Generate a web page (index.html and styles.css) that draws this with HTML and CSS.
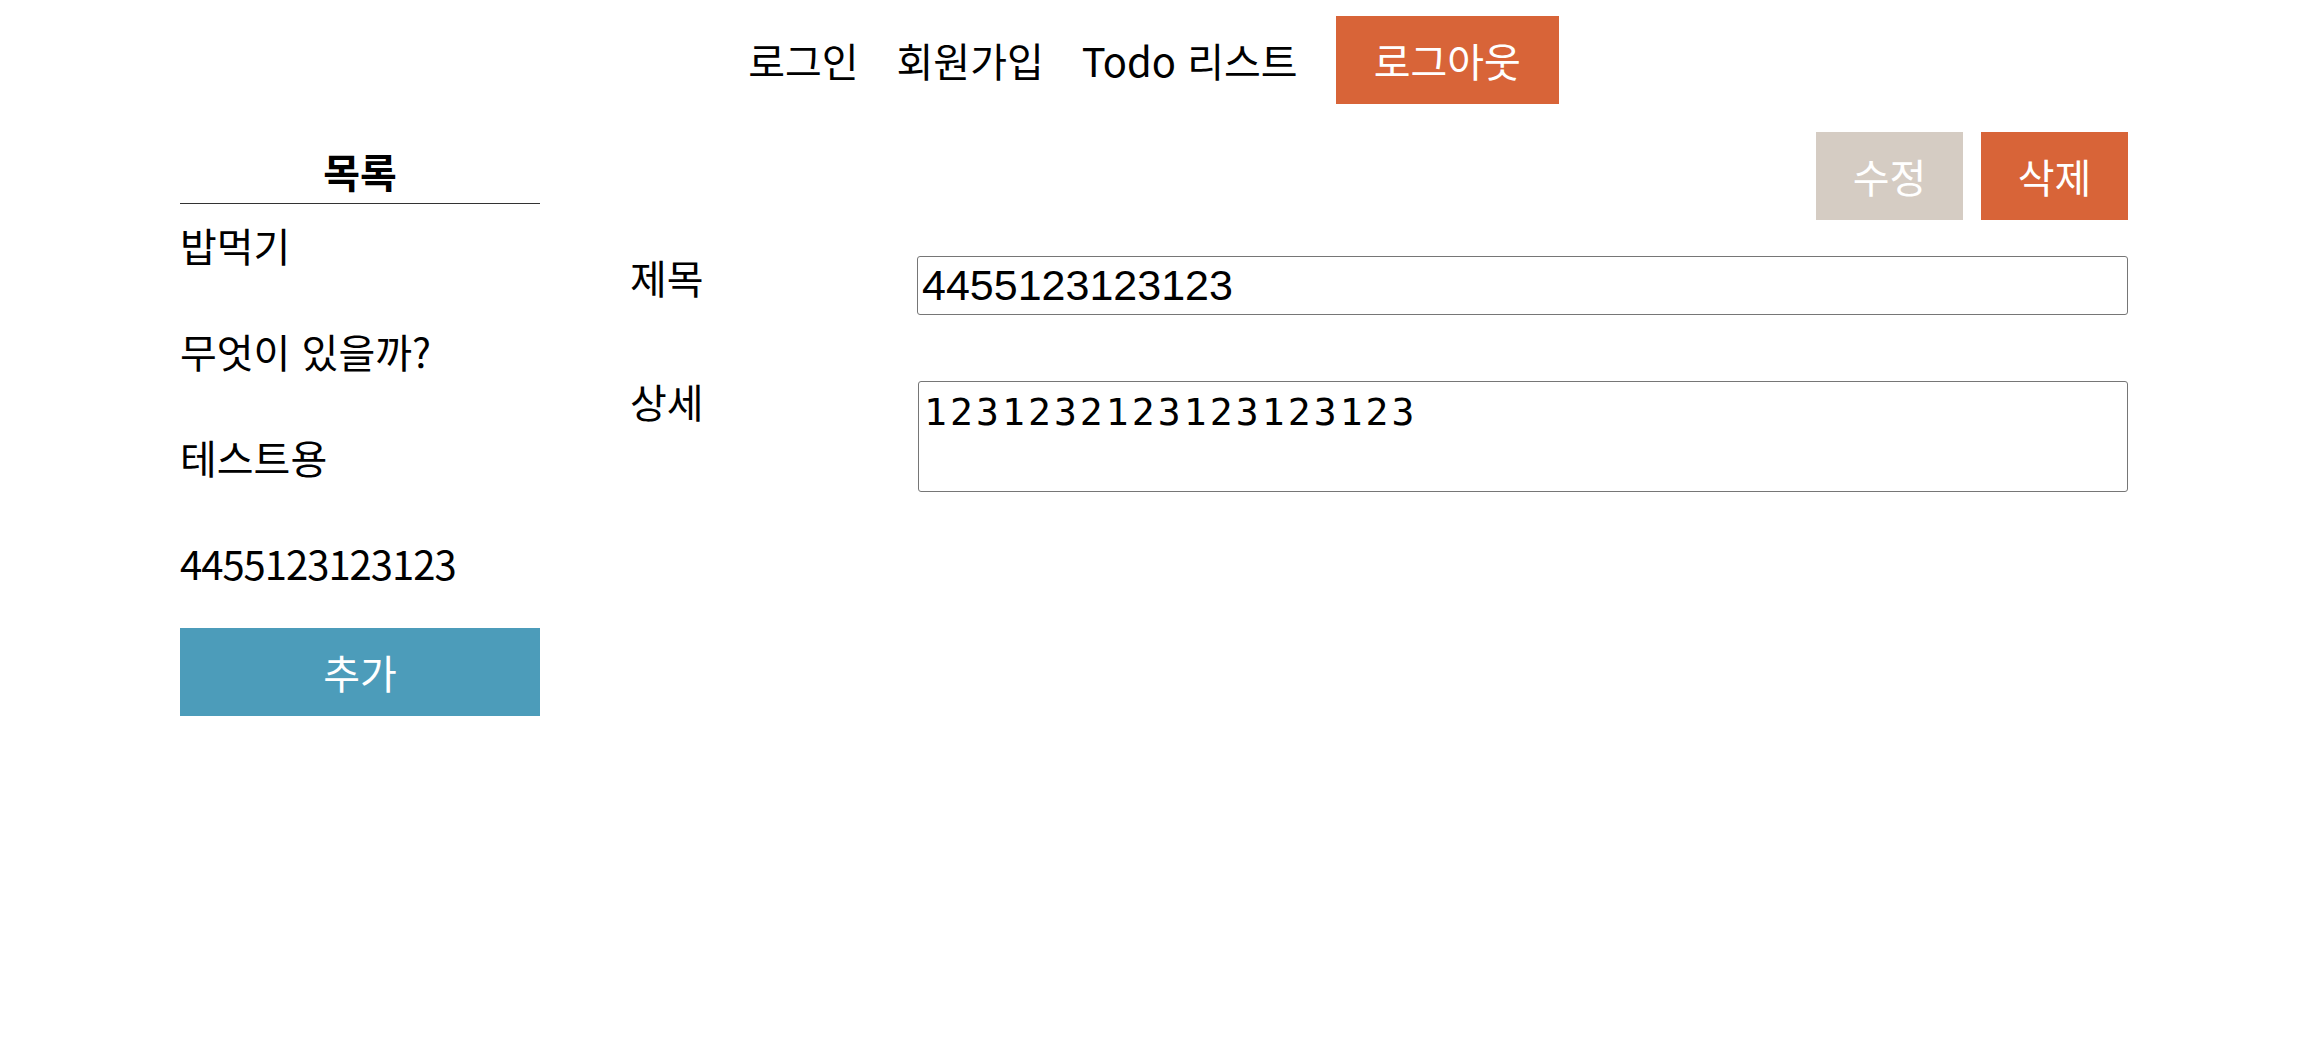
FILE: index.html
```html
<!DOCTYPE html>
<html lang="ko">
<head>
<meta charset="utf-8">
<title>Todo</title>
<link rel="stylesheet" href="styles.css">
</head>
<body>
<header class="topnav">
  <a class="nav-link">로그인</a>
  <a class="nav-link">회원가입</a>
  <a class="nav-link">Todo 리스트</a>
  <button class="btn btn-orange nav-logout">로그아웃</button>
</header>
<main class="layout">
  <aside class="sidebar">
    <h2 class="sidebar-title">목록</h2>
    <ul class="todo-list">
      <li class="todo-item">밥먹기</li>
      <li class="todo-item">무엇이 있을까?</li>
      <li class="todo-item">테스트용</li>
      <li class="todo-item todo-item-num">4455123123123</li>
    </ul>
    <button class="btn btn-blue add-btn">추가</button>
  </aside>
  <section class="detail">
    <div class="actions">
      <button class="btn btn-gray action-btn">수정</button>
      <button class="btn btn-orange action-btn">삭제</button>
    </div>
    <div class="field-row">
      <label class="field-label">제목</label>
      <input class="field-input" type="text" value="4455123123123">
    </div>
    <div class="field-row field-row-area">
      <label class="field-label field-label-area">상세</label>
      <textarea class="field-area">1231232123123123123</textarea>
    </div>
  </section>
</main>
</body>
</html>
```

FILE: styles.css
```css
* { box-sizing: border-box; }

html, body {
  margin: 0;
  padding: 0;
  background: #ffffff;
}

body {
  font-family: "Noto Sans CJK KR", "Noto Sans", sans-serif;
  font-size: 40px;
  color: #000000;
}

.btn {
  border: none;
  font-family: "Noto Sans CJK KR", "Noto Sans", sans-serif;
  font-size: 40px;
  color: #ffffff;
  margin: 0;
  cursor: pointer;
}
.btn-orange { background: #d86438; }
.btn-blue { background: #4c9cba; }
.btn-gray { background: #d5ccc3; }

/* top navigation */
.topnav {
  display: flex;
  justify-content: center;
  align-items: center;
  gap: 38px;
  padding: 16px 15px 0 0;
  height: 104px;
}
.nav-link {
  color: #000000;
  text-decoration: none;
  line-height: 50px;
}
.nav-logout {
  height: 88px;
  padding: 0 38px;
  line-height: 88px;
}

/* main layout */
.layout {
  display: flex;
  align-items: flex-start;
  padding: 28px 194px 0 180px;
}

.sidebar {
  width: 360px;
  flex: 0 0 360px;
  padding-top: 14px;
  display: flex;
  flex-direction: column;
}
.sidebar-title {
  margin: 0;
  font-size: 40px;
  font-weight: 700;
  line-height: 50px;
  text-align: center;
  padding-bottom: 7px;
  border-bottom: 1px solid #333333;
}
.todo-list {
  list-style: none;
  margin: 0;
  padding: 16px 0 0 0;
  display: flex;
  flex-direction: column;
  gap: 56px;
}
.todo-item {
  line-height: 50px;
  height: 50px;
  white-space: nowrap;
}
.todo-item-num {
  letter-spacing: -1px;
}
.add-btn {
  margin-top: 40px;
  width: 100%;
  height: 88px;
  line-height: 88px;
  padding: 0;
}

/* detail */
.detail {
  flex: 1;
  margin-left: 90px;
  display: flex;
  flex-direction: column;
}
.actions {
  display: flex;
  justify-content: flex-end;
  gap: 18px;
}
.action-btn {
  width: 147px;
  height: 88px;
  line-height: 88px;
  padding: 0;
}
.field-row {
  display: flex;
  align-items: flex-start;
  margin-top: 36px;
}
.field-row-area {
  margin-top: 66px;
}
.field-label {
  width: 287px;
  flex: 0 0 287px;
  line-height: 50px;
  margin-top: -4px;
}
.field-label-area {
  margin-top: -5px;
}
.field-input {
  flex: 1;
  height: 59px;
  border: 1px solid #767676;
  border-radius: 3px;
  padding: 0 4px;
  font-family: "Liberation Sans", Arial, sans-serif;
  font-size: 43px;
  color: #000000;
  background: #ffffff;
  outline: none;
}
.field-area {
  flex: 1;
  margin-left: 1px;
  height: 111px;
  border: 1px solid #767676;
  border-radius: 3px;
  padding: 8px 5px;
  font-family: "DejaVu Sans Mono", monospace;
  font-size: 38px;
  letter-spacing: 3.1px;
  color: #000000;
  background: #ffffff;
  resize: none;
  outline: none;
  overflow: hidden;
}
```
